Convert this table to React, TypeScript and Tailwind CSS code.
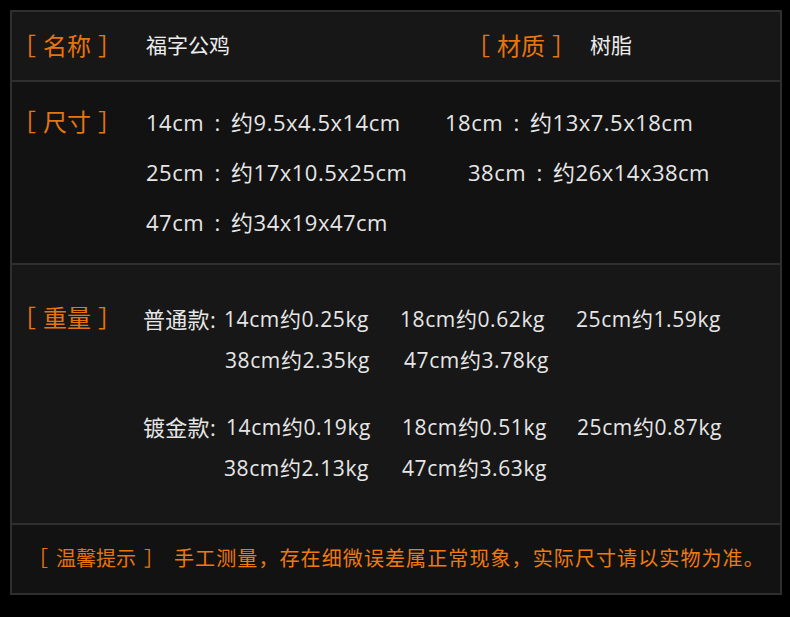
const Label = ({ text, size = "text-[24px]", inner = "mx-[7px]" }: { text: string; size?: string; inner?: string }) => (
  <span className={`flex ${size} text-[#e8740c]`}>
    <span>［</span>
    <span className={inner}>{text}</span>
    <span>］</span>
  </span>
);

const Colon = () => <span className="inline-block w-[27px] text-center">:</span>;

export default function App() {
  const font = { fontFamily: '"Open Sans", "Noto Sans CJK SC", sans-serif' };
  return (
    <div className="w-[790px] h-[617px] bg-black pt-[10px] pl-[10px]" style={font}>
      <div className="w-[772px] h-[585px] border-2 border-[#2f2f2f] flex flex-col">
        {/* 名称 / 材质 */}
        <div className="h-[70px] bg-[#171717] flex items-center border-b-2 border-[#2f2f2f]">
          <div className="w-[134px]">
            <Label text="名称" />
          </div>
          <div className="w-[320px] text-[21px] text-[#ececec]">福字公鸡</div>
          <div className="w-[124px]">
            <Label text="材质" />
          </div>
          <div className="text-[21px] text-[#ececec]">树脂</div>
        </div>

        {/* 尺寸 */}
        <div className="h-[183px] bg-[#121212] flex border-b-2 border-[#2f2f2f] pt-[15px]">
          <div className="w-[134px] leading-[50px]">
            <Label text="尺寸" />
          </div>
          <div className="flex flex-col text-[22px] text-[#e6e6e6] tracking-[0.5px] leading-[50px]">
            <div className="flex">
              <span className="w-[299px]">
                14cm<Colon />约9.5x4.5x14cm
              </span>
              <span>
                18cm<Colon />约13x7.5x18cm
              </span>
            </div>
            <div className="flex">
              <span className="w-[322px]">
                25cm<Colon />约17x10.5x25cm
              </span>
              <span>
                38cm<Colon />约26x14x38cm
              </span>
            </div>
            <div className="flex">
              <span>
                47cm<Colon />约34x19x47cm
              </span>
            </div>
          </div>
        </div>

        {/* 重量 */}
        <div className="h-[260px] bg-[#171717] flex border-b-2 border-[#2f2f2f] pt-[34px]">
          <div className="w-[126px] leading-[41px] -mt-[2px]">
            <Label text="重量" />
          </div>
          <div className="flex flex-col text-[21px] text-[#e6e6e6] leading-[41px] tracking-[0.6px]">
            <div className="flex">
              <span className="w-[86px] text-right pr-[8px] text-[22px] tracking-[0.3px] whitespace-nowrap">普通款:</span>
              <div className="flex flex-col">
                <div className="grid grid-cols-[176px_176px_auto]">
                  <span>14cm约0.25kg</span>
                  <span>18cm约0.62kg</span>
                  <span>25cm约1.59kg</span>
                </div>
                <div className="grid grid-cols-[179px_auto] pl-[1px]">
                  <span>38cm约2.35kg</span>
                  <span>47cm约3.78kg</span>
                </div>
              </div>
            </div>
            <div className="flex mt-[26px]">
              <span className="w-[86px] text-right pr-[8px] text-[22px] tracking-[0.3px] whitespace-nowrap">镀金款:</span>
              <div className="flex flex-col">
                <div className="grid grid-cols-[176px_175px_auto] pl-[2px]">
                  <span>14cm约0.19kg</span>
                  <span>18cm约0.51kg</span>
                  <span>25cm约0.87kg</span>
                </div>
                <div className="grid grid-cols-[178px_auto]">
                  <span>38cm约2.13kg</span>
                  <span>47cm约3.63kg</span>
                </div>
              </div>
            </div>
          </div>
        </div>

        {/* 温馨提示 */}
        <div className="flex-1 bg-[#121212] flex items-center pl-[16px] text-[20px] text-[#f07a0e]">
          <Label text="温馨提示" size="text-[20px]" inner="mx-[8px]" />
          <span className="ml-[10px] tracking-[1.1px]">手工测量，存在细微误差属正常现象，实际尺寸请以实物为准。</span>
        </div>
      </div>
    </div>
  );
}
